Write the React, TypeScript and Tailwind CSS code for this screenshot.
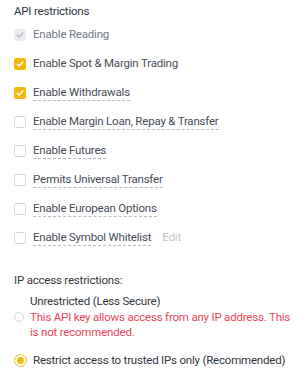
const FONT = "font-['Roboto',_'Noto_Sans',_sans-serif]";

function Check({ state }: { state: "on" | "off" | "disabled" }) {
  if (state === "off") {
    return <span className="w-3 h-3 shrink-0 rounded-[2px] border border-[#d5d8dc] bg-white" />;
  }
  const bg = state === "on" ? "bg-[#f0b90b]" : "bg-[#eaecef]";
  const stroke = state === "on" ? "#ffffff" : "#b7bdc6";
  return (
    <span className={`w-3 h-3 shrink-0 rounded-[2px] ${bg} flex items-center justify-center`}>
      <svg width="8" height="8" viewBox="0 0 8 8" fill="none">
        <path d="M1.2 4.2 L3.2 6 L6.8 2" stroke={stroke} strokeWidth="1.4" strokeLinecap="round" strokeLinejoin="round" />
      </svg>
    </span>
  );
}

const rows: { label: string; state: "on" | "off" | "disabled"; dashed: boolean; edit?: boolean }[] = [
  { label: "Enable Reading", state: "disabled", dashed: false },
  { label: "Enable Spot & Margin Trading", state: "on", dashed: false },
  { label: "Enable Withdrawals", state: "on", dashed: true },
  { label: "Enable Margin Loan, Repay & Transfer", state: "off", dashed: true },
  { label: "Enable Futures", state: "off", dashed: true },
  { label: "Permits Universal Transfer", state: "off", dashed: true },
  { label: "Enable European Options", state: "off", dashed: true },
  { label: "Enable Symbol Whitelist", state: "off", dashed: true, edit: true },
];

export default function App() {
  return (
    <div className={`${FONT} w-[307px] h-[368px] bg-white pl-[14px] pt-[3px] text-[11.5px] tracking-[-0.2px] overflow-hidden`}>
      <div className="h-[17px] leading-[17px] text-[#32373e]">API restrictions</div>
      <div className="flex flex-col">
        {rows.map((r) => (
          <div key={r.label} className="h-[29px] flex items-center gap-[7px]">
            <Check state={r.state} />
            <span
              className={`leading-[15px] ${r.state === "disabled" ? "text-[#707a8a]" : "text-[#474d57]"} ${
                r.dashed ? "border-b border-dashed border-[#b7bdc6]" : ""
              }`}
            >
              {r.label}
            </span>
            {r.edit && <span className="ml-[4px] text-[#c1c6cd]">Edit</span>}
          </div>
        ))}
      </div>
      <div className="mt-[19px] leading-[18px] text-[#32373e]">IP access restrictions:</div>
      <div className="mt-[5px] flex items-center gap-[6px]">
        <span className="w-[10px] h-[10px] shrink-0 rounded-full border border-[#d5d8dc]" />
        <div className="w-[262px] flex flex-col leading-[15.5px]">
          <span className="text-[#32373e]">Unrestricted (Less Secure)</span>
          <span className="text-[#e8465a]">
            This API key allows access from any IP address. This is not recommended.
          </span>
        </div>
      </div>
      <div className="mt-[12px] flex items-center gap-[6px]">
        <span className="w-[13px] h-[13px] shrink-0 rounded-full border border-[#f0b90b] flex items-center justify-center">
          <span className="w-[7px] h-[7px] rounded-full bg-[#f0b90b]" />
        </span>
        <span className="leading-[15px] text-[#32373e]">Restrict access to trusted IPs only (Recommended)</span>
      </div>
    </div>
  );
}
